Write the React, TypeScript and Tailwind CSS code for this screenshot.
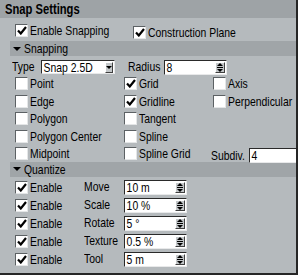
import React from "react";

const font = { fontFamily: '"Liberation Sans", Arial, sans-serif' };

// narrow the text so it reads like the old bitmap UI font
function Txt({ children, className = "" }: { children: React.ReactNode; className?: string }) {
    return <span className={`inline-block origin-left scale-x-[0.8] whitespace-nowrap leading-none ${className}`}>{children}</span>;
}

function Check({ on }: { on?: boolean }) {
    return (
        <div className="w-[13px] h-[13px] shrink-0 bg-white border-t border-l border-[#5c6164] border-b border-r border-b-[#e4e6e7] border-r-[#e4e6e7] flex items-center justify-center">
            {on && (
                <svg width="10" height="9" viewBox="0 0 10 9">
                    <polyline points="1,4.5 3.8,7.5 9,1" fill="none" stroke="#000" strokeWidth="2.2" />
                </svg>
            )}
        </div>
    );
}

function CheckItem({ on, label }: { on?: boolean; label: string }) {
    return (
        <div className="flex items-center gap-[2px]">
            <Check on={on} />
            <Txt>{label}</Txt>
        </div>
    );
}

function Spinner() {
    return (
        <div className="w-[10px] h-[11px] mr-[1px] bg-[#c3c7c9] border border-t-white border-l-white border-b-[#404040] border-r-[#404040] flex flex-col items-center justify-center gap-[1px]">
            <svg width="6" height="3" viewBox="0 0 6 3"><polygon points="0,3 6,3 3,0" fill="#000" /></svg>
            <div className="w-[6px] h-px bg-[#000]" />
            <svg width="6" height="3" viewBox="0 0 6 3"><polygon points="0,0 6,0 3,3" fill="#000" /></svg>
        </div>
    );
}

function Field({ value, w, spin = true }: { value: string; w: string; spin?: boolean }) {
    return (
        <div className={`${w} h-[15px] shrink-0 bg-white border-t border-l border-[#2a2a2a] border-b border-r border-b-[#e8e9ea] border-r-[#e8e9ea] flex items-center justify-between overflow-hidden`}>
            <Txt className="pl-[2px]">{value}</Txt>
            {spin && <Spinner />}
        </div>
    );
}

function Header({ label }: { label: string }) {
    return (
        <div className="ml-[10px] h-[15px] bg-[#a0a5a8] flex items-center pl-[3px] gap-[3px]">
            <svg width="8" height="4" viewBox="0 0 8 4"><polygon points="0,0 8,0 4,4" fill="#000" /></svg>
            <Txt>{label}</Txt>
        </div>
    );
}

const quant = [
    ["Move", "10 m"],
    ["Scale", "10 %"],
    ["Rotate", "5 °"],
    ["Texture", "0.5 %"],
    ["Tool", "5 m"],
];

export default function App() {
    return (
        <div style={font} className="w-[298px] h-[275px] overflow-hidden bg-[#b5babd] border-r-2 border-b-2 border-[#262626] text-[13px] text-black">
            <div className="h-[18px] bg-[#9ea3a6] pl-[5px] flex items-center">
                <Txt className="font-bold text-[14px]">Snap Settings</Txt>
            </div>

            <div className="h-[23px] pt-[6px] pl-[15px] flex">
                <div className="w-[118px]"><CheckItem on label="Enable Snapping" /></div>
                <CheckItem on label="Construction Plane" />
            </div>

            <Header label="Snapping" />

            <div className="h-[14px] mt-[4px] flex items-center pl-[12px]">
                <div className="w-[29px]"><Txt>Type</Txt></div>
                <div className="w-[74px] h-[14px] bg-white border-t border-l border-[#2a2a2a] border-b border-r border-b-[#e8e9ea] border-r-[#e8e9ea] flex items-center justify-between">
                    <Txt className="pl-[2px]">Snap 2.5D</Txt>
                    <div className="w-[12px] h-[11px] mr-[1px] bg-[#c3c7c9] border border-t-white border-l-white border-b-[#404040] border-r-[#404040] flex items-center justify-center">
                        <svg width="6" height="3" viewBox="0 0 6 3"><polygon points="0,0 6,0 3,3" fill="#000" /></svg>
                    </div>
                </div>
                <div className="ml-[13px] w-[36px]"><Txt>Radius</Txt></div>
                <Field value="8" w="w-[63px]" />
            </div>

            <div className="mt-[3px] pl-[15px] grid grid-cols-[109px_89px_1fr] auto-rows-[17.5px] items-start">
                <CheckItem label="Point" />
                <CheckItem on label="Grid" />
                <CheckItem label="Axis" />
                <CheckItem label="Edge" />
                <CheckItem on label="Gridline" />
                <CheckItem label="Perpendicular" />
                <CheckItem label="Polygon" />
                <CheckItem label="Tangent" />
                <div />
                <CheckItem label="Polygon Center" />
                <CheckItem label="Spline" />
                <div />
                <CheckItem label="Midpoint" />
                <CheckItem label="Spline Grid" />
                <div className="flex items-center -mt-[1px] -ml-[2px]">
                    <div className="w-[38px]"><Txt>Subdiv.</Txt></div>
                    <Field value="4" w="w-[50px]" spin={false} />
                </div>
            </div>

            <div className="-mt-[3px]"><Header label="Quantize" /></div>

            <div className="mt-[3px] pl-[15px] flex flex-col gap-[3px]">
                {quant.map(([name, val]) => (
                    <div key={name} className="flex items-center h-[15px]">
                        <div className="w-[69px]"><CheckItem on label="Enable" /></div>
                        <div className="w-[40px]"><Txt>{name}</Txt></div>
                        <Field value={val} w="w-[63px]" />
                    </div>
                ))}
            </div>
        </div>
    );
}
